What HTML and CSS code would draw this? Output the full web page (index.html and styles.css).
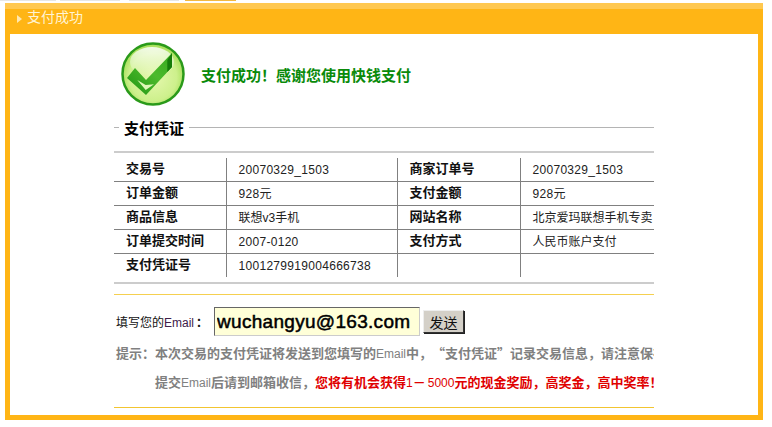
FILE: index.html
```html
<!DOCTYPE html>
<html lang="zh">
<head>
<meta charset="utf-8">
<title>支付成功</title>
<link rel="stylesheet" href="styles.css">
</head>
<body>
<div class="tabs"><span class="tab t1"></span><span class="tab t2"></span><span class="tab t3"></span><span class="tab t4"></span></div>
<div class="panel">
  <div class="head"><span class="arrow"></span>支付成功</div>
  <div class="body">
    <div class="col">
      <div class="success">
        <svg class="check" width="64" height="64" viewBox="0 0 64 64">
          <defs>
            <radialGradient id="disc" cx="50%" cy="55%" r="52%">
              <stop offset="0" stop-color="#e6f8b0"/>
              <stop offset="0.75" stop-color="#cdf08c"/>
              <stop offset="1" stop-color="#a8e05c"/>
            </radialGradient>
            <linearGradient id="shine" x1="0" y1="0" x2="0" y2="1">
              <stop offset="0" stop-color="#ffffff" stop-opacity="0.85"/>
              <stop offset="1" stop-color="#ffffff" stop-opacity="0"/>
            </linearGradient>
            <linearGradient id="tick" x1="0" y1="1" x2="1" y2="0">
              <stop offset="0" stop-color="#1f9412"/>
              <stop offset="0.55" stop-color="#4cba2c"/>
              <stop offset="1" stop-color="#36a81e"/>
            </linearGradient>
          </defs>
          <circle cx="32" cy="32" r="30.5" fill="url(#disc)" stroke="#2a9a1a" stroke-width="2.5"/>
          <ellipse cx="31" cy="20" rx="22" ry="15" fill="url(#shine)"/>
          <path d="M6 36 L14 26 L25 38 L51 11 L51 25 L25 53 Z" fill="url(#tick)"/>
          <path d="M16.3 38 L24.7 48 L33 42.3 L24.7 43 Z" fill="#e0f8b8"/>
          <path d="M46.3 18 L51 11 L51 25 L46.3 30 Z" fill="#167c0a"/>
        </svg>
        <span class="msg">支付成功！感谢您使用快钱支付</span>
      </div>
      <div class="legend"><span class="legend-text">支付凭证</span></div>
      <div class="tbl-wrap">
        <table class="info">
          <tr><th>交易号</th><td class="num">20070329_1503</td><th class="c3">商家订单号</th><td class="c4 num">20070329_1503</td></tr>
          <tr><th>订单金额</th><td class="num">928元</td><th class="c3">支付金额</th><td class="c4 num">928元</td></tr>
          <tr><th>商品信息</th><td>联想v3手机</td><th class="c3">网站名称</th><td class="c4">北京爱玛联想手机专卖</td></tr>
          <tr><th>订单提交时间</th><td class="num">2007-0120</td><th class="c3">支付方式</th><td class="c4">人民币账户支付</td></tr>
          <tr><th>支付凭证号</th><td class="num">1001279919004666738</td><th class="c3"></th><td class="c4"></td></tr>
        </table>
      </div>
      <div class="form">
        <label class="lbl">填写您的<span class="lat-purple">Email</span><span class="colon">：</span></label>
        <input class="email" type="text" value="wuchangyu@163.com">
        <button class="send" type="button">发送</button>
      </div>
      <p class="hint">提示：本次交易的支付凭证将发送到您填写的<span class="lat">Email</span>中，“支付凭证”记录交易信息，请注意保存</p>
      <p class="hint promo">提交<span class="lat">Email</span>后请到邮箱收信，<span class="red">您将有机会获得<span class="lat">1</span>－<span class="lat amount">5000</span>元的现金奖励，高奖金，高中奖率！</span></p>
      <div class="rule"></div>
    </div>
  </div>
</div>
</body>
</html>
```
FILE: styles.css
```css
* { box-sizing: border-box; }
html, body { margin: 0; padding: 0; background: #fff; }
body { width: 772px; height: 427px; overflow: hidden; font-family: "Liberation Sans", "Noto Sans CJK SC", sans-serif; text-spacing-trim: space-all; }
.tabs { height: 3px; display: flex; }
.tab { display: block; height: 1px; }
.t1 { width: 56px; background: #e6e6e6; }
.t2 { width: 60px; margin-left: 4px; background: #e6e6e6; }
.t3 { width: 50px; margin-left: 9px; background: #e6e6e6; }
.t4 { width: 51px; margin-left: 6px; background: #f2b840; }
.panel { margin-left: 5px; width: 758px; height: 417px; background: #ffb515; padding: 0 5px 5px; display: flex; flex-direction: column; }
.head { height: 31px; margin: 0 -5px; padding: 0 0 3px 12px; background: linear-gradient(#ffc850 0, #ffc850 6px, #ffb515 6px); color: #fff4d4; font-size: 14px; line-height: 20px; display: flex; align-items: center; }
.arrow { width: 0; height: 0; border-left: 5px solid #ffe8b0; border-top: 4px solid transparent; border-bottom: 4px solid transparent; margin-right: 5px; margin-top: 3px; }
.body { flex: 1; background: #fff; padding-left: 104px; }
.col { width: 540px; overflow: hidden; }
.success { display: flex; align-items: center; height: 70px; padding-left: 7px; padding-top: 10px; }
.check { flex: none; }
.msg { margin-left: 16px; color: #0a8a0a; font-size: 15px; font-weight: bold; font-family: "Noto Sans CJK SC", sans-serif; }
.legend { height: 47px; display: flex; align-items: center; background: linear-gradient(#b4b4b4, #b4b4b4) 0 50% / 100% 1px no-repeat; padding-left: 5px; }
.legend-text { background: #fff; padding: 0 5px; font-size: 15px; font-weight: bold; color: #000; font-family: "Noto Sans CJK SC", sans-serif; }
.tbl-wrap { border-top: 2px solid #ccc; border-bottom: 2px solid #ccc; padding: 5px 0 0; height: 133px; }
.info { border-collapse: collapse; width: 540px; table-layout: fixed; font-size: 12px; color: #222; }
.info th, .info td { height: 24px; padding: 0 0 0 12px; text-align: left; border-top: 1px solid #808080; white-space: nowrap; overflow: hidden; line-height: 14px; }
.info tr:first-child th, .info tr:first-child td { border-top: 0; height: 23px; }
.info th { width: 112px; padding-bottom: 3px; font-size: 13px; font-weight: bold; color: #111; font-family: "Noto Sans CJK SC", sans-serif; }
.info td { width: 171px; padding-top: 1px; border-left: 1px solid #808080; }
.info .num { letter-spacing: 0.3px; }
.info .c3 { width: 123px; border-left: 1px solid #808080; }
.info .c4 { width: 134px; }
.form { margin-top: 10px; border-top: 1px solid #f5d050; height: 50px; display: flex; align-items: center; padding: 4px 0 0 2px; font-size: 12px; color: #111; }
.lbl { white-space: nowrap; width: 89px; }
.lat-purple { color: #40204a; font-family: "Liberation Sans", sans-serif; }
.colon { margin-left: 2px; font-weight: bold; }
.email { width: 206px; height: 29px; margin-left: 9px; padding: 0 2px; border: 1px solid; border-color: #666 #ccc #ccc #666; background: #ffffd8; font-family: "Liberation Sans", sans-serif; font-size: 19px; letter-spacing: 0.3px; -webkit-text-stroke: 0.5px #000; color: #000; }
.send { width: 41px; height: 23px; margin-left: 3px; padding: 0; background: #d4d0c8; border: 1px solid; border-color: #eee #333 #333 #eee; box-shadow: 1px 1px 0 #222; font-size: 14px; font-family: "Noto Sans CJK SC", sans-serif; color: #111; }
.hint { margin: 0; white-space: nowrap; font-family: "Noto Sans CJK SC", sans-serif; font-size: 13px; font-weight: bold; color: #808080; line-height: 16px; padding: 1px 0 0 2px; height: 30px; }
.lat { font-family: "Liberation Sans", sans-serif; font-size: 12px; font-weight: normal; }
.amount { margin-left: 2px; }
.promo { padding-left: 41px; padding-top: 0; height: 33px; }
.rule { height: 1px; background: #f2c530; }
.red { color: #e00000; }
```
